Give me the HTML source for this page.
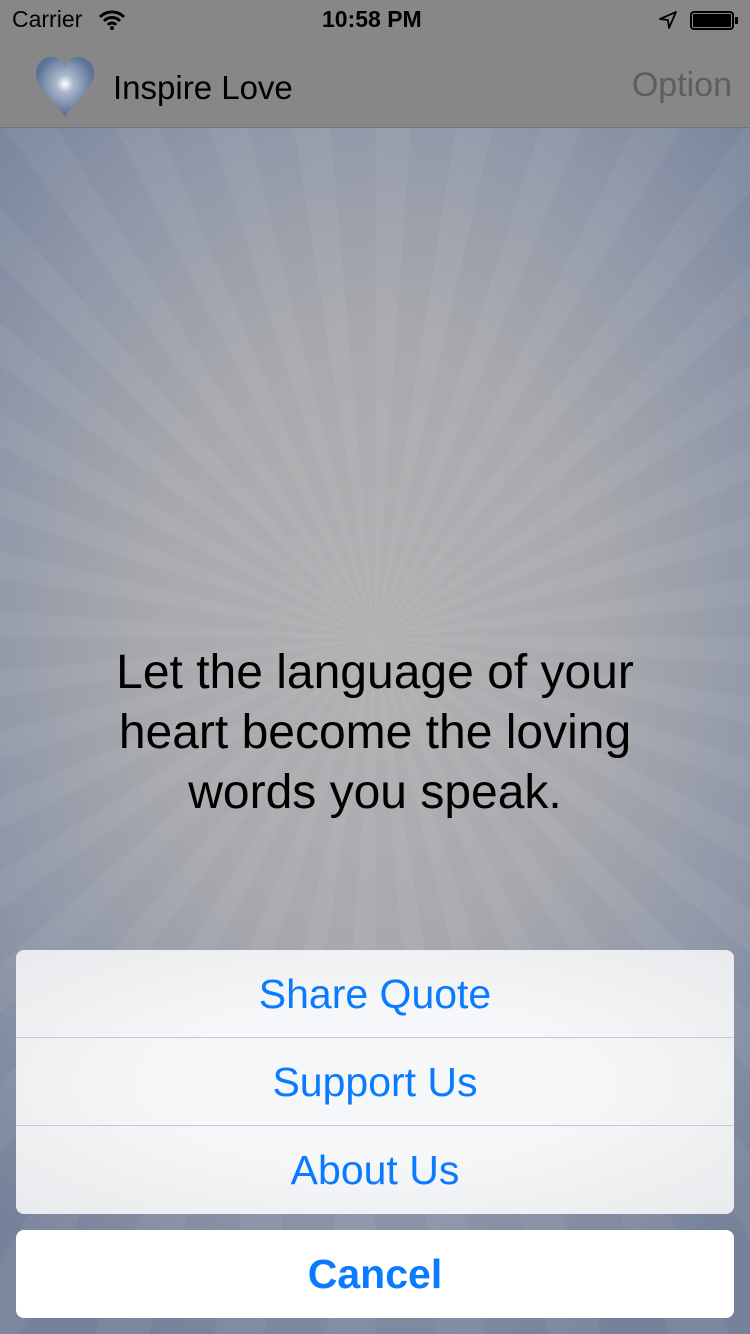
<!DOCTYPE html>
<html><head><meta charset="utf-8"><style>
*{margin:0;padding:0;box-sizing:border-box}
body{width:750px;height:1334px;overflow:hidden;position:relative;font-family:"Liberation Sans",sans-serif;
background:radial-gradient(ellipse 560px 760px at 375px 640px,#b2b2b4 0%,#a8a9ad 40%,#8f97a8 72%,#76829a 100%);}
.rays{position:absolute;left:0;top:128px;width:750px;height:1206px;
background:repeating-conic-gradient(from 0deg at 375px 510px,rgba(255,255,255,0.045) 0deg 4deg,rgba(0,0,0,0) 4deg 9deg)}
.hdr{position:absolute;left:0;top:0;width:750px;height:128px;background:#878787;border-bottom:1px solid #6f7384}
.sb{position:absolute;top:6px;font-size:23px;color:#000}
.title{position:absolute;left:113px;top:69px;font-size:33px;color:#000}
.opt{position:absolute;right:18px;top:66px;font-size:34px;color:#5e5e5e}
.quote{position:absolute;left:0;width:750px;top:643px;text-align:center;font-size:48px;line-height:60px;color:#000}
.sheet{position:absolute;left:16px;top:950px;width:718px;height:264px;border-radius:8px;
background:radial-gradient(ellipse at center,#f6f7f8 40%,#e9eaed 100%);overflow:hidden}
.row{height:88px;line-height:88px;text-align:center;font-size:41px;color:#0a7aff;border-bottom:1px solid #c2c9d2}
.row:last-child{border-bottom:none}
.cancel{position:absolute;left:16px;top:1230px;width:718px;height:88px;border-radius:8px;background:#fff;text-align:center;line-height:88px;font-size:41px;font-weight:bold;color:#0a7aff}
</style></head><body>
<div class="rays"></div>
<div class="hdr">
<div class="sb" style="left:12px">Carrier</div>
<svg style="position:absolute;left:98px;top:10px" width="28" height="20" viewBox="0 0 28 20"><path d="M2 7a17 17 0 0 1 24 0M6 11a11 11 0 0 1 16 0M10 15a5 5 0 0 1 8 0" stroke="#000" stroke-width="3" fill="none"/><circle cx="14" cy="18" r="2" fill="#000"/></svg>
<div class="sb" style="left:322px;font-weight:bold">10:58 PM</div>
<svg style="position:absolute;left:658px;top:10px" width="20" height="20" viewBox="0 0 20 20"><path d="M18 2L2 9l8 1 1 8z" stroke="#000" stroke-width="1.8" fill="none" stroke-linejoin="round"/></svg>
<div style="position:absolute;left:690px;top:11px;width:44px;height:19px;border:2px solid #000;border-radius:4px;padding:1px"><div style="width:100%;height:100%;background:#000;border-radius:1px"></div></div>
<div style="position:absolute;left:735px;top:17px;width:3px;height:7px;background:#000"></div>
<svg style="position:absolute;left:33px;top:55px" width="64" height="64" viewBox="0 0 64 64"><defs><radialGradient id="g" cx="0.5" cy="0.45" r="0.5"><stop offset="0" stop-color="#fff"/><stop offset="0.3" stop-color="#aab6cc"/><stop offset="1" stop-color="#5b7396"/></radialGradient></defs><path d="M32 62C22 44 2 34 3 17 4 5 14 1 21 2 27 3 31 8 32 12 33 8 37 3 43 2 50 1 60 5 61 17 62 34 42 44 32 62z" fill="url(#g)"/></svg>
<div class="title">Inspire Love</div>
<div class="opt">Option</div>
</div>
<div class="quote">Let the language of your<br>heart become the loving<br>words you speak.</div>
<div class="sheet"><div class="row">Share Quote</div><div class="row">Support Us</div><div class="row">About Us</div></div>
<div class="cancel">Cancel</div>
</body></html>
